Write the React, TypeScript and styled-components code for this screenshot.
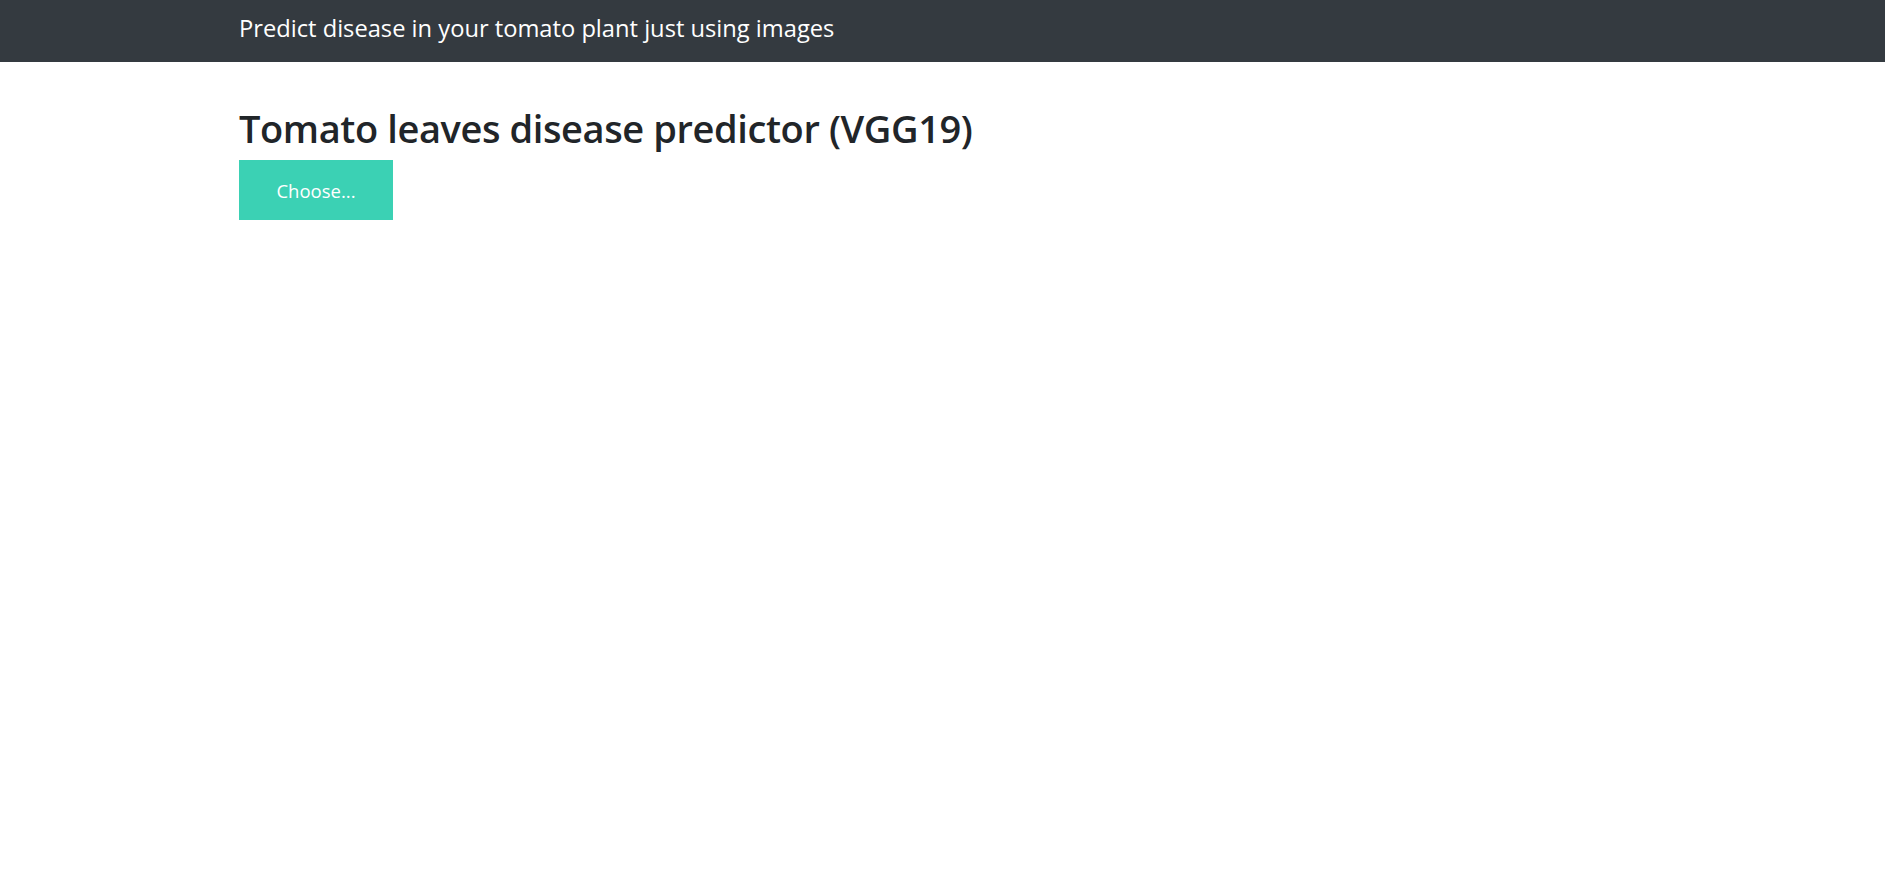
import { FC } from "react";
import styled, { createGlobalStyle } from "styled-components";

const GlobalStyle = createGlobalStyle`
  html, body {
    margin: 0;
    padding: 0;
    background: #ffffff;
    font-family: "Open Sans", "Noto Sans", "Liberation Sans", sans-serif;
    color: #212529;
  }
`;

const Navbar = styled("nav")`
  height: 62px;
  box-sizing: border-box;
  padding-bottom: 6px;
  background: #343a40;
  display: flex;
  align-items: center;
`;

const Container = styled("div")`
  width: 100%;
  max-width: 1407px;
  margin: 0 auto;
  box-sizing: border-box;
`;

const Brand = styled("span")`
  font-size: 23.7px;
  color: #ffffff;
  white-space: nowrap;
`;

const Main = styled(Container)`
  padding-top: 42px;
`;

const Title = styled("h1")`
  margin: 0 0 8px 0;
  font-size: 38px;
  line-height: 48px;
  font-weight: 600;
  letter-spacing: -0.4px;
  color: #212529;
`;

const ChooseButton = styled("button")`
  width: 154px;
  height: 60px;
  border: none;
  border-radius: 0;
  background: #3bd1b4;
  color: #ffffff;
  font-family: inherit;
  font-size: 18.5px;
  cursor: pointer;
  display: flex;
  align-items: center;
  justify-content: center;
`;

const App: FC = () => {
  return (
    <>
      <GlobalStyle />
      <Navbar>
        <Container>
          <Brand>Predict disease in your tomato plant just using images</Brand>
        </Container>
      </Navbar>
      <Main>
        <Title>Tomato leaves disease predictor (VGG19)</Title>
        <ChooseButton>Choose...</ChooseButton>
      </Main>
    </>
  );
};

export default App;
